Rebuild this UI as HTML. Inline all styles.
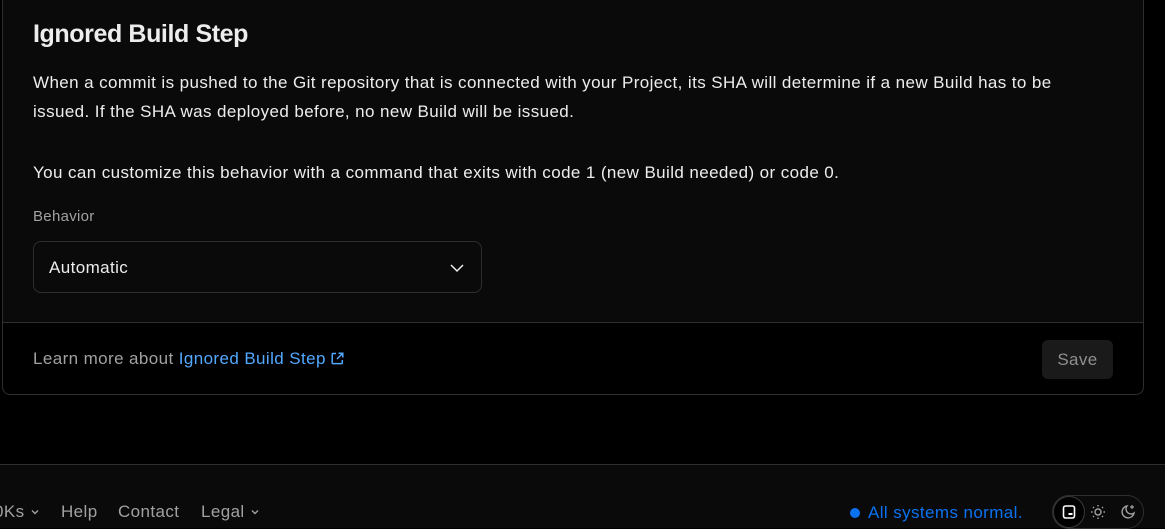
<!DOCTYPE html>
<html><head><style>
*{box-sizing:border-box;margin:0;padding:0}
body{width:1165px;height:528px;background:#000;font-family:"Liberation Sans",sans-serif;color:#ededed;position:relative;overflow:hidden}
.t{font-size:17px;letter-spacing:0.4px}
.card{position:absolute;left:2px;top:-10px;width:1142px;height:405px;border:1px solid #2e2e2e;border-radius:8px;background:#000;overflow:hidden}
.top{position:absolute;left:0;top:0;width:100%;height:332px;background:#0a0a0a;border-bottom:1px solid #2e2e2e}
h2{position:absolute;left:30px;top:29px;font-size:25px;font-weight:bold;letter-spacing:-0.4px;color:#ededed}
p{position:absolute;left:30px;line-height:29px;color:#ededed;width:1100px;white-space:nowrap}
.lbl{position:absolute;left:30px;top:217px;font-size:15px;letter-spacing:0.3px;color:#a1a1a1}
.sel{position:absolute;left:30px;top:250px;width:449px;height:52px;border:1px solid #2e2e2e;border-radius:8px;background:#0a0a0a}
.sel span{position:absolute;left:15px;top:16px;color:#ededed}
.sel svg{position:absolute;right:16px;top:18px}
.learn{position:absolute;left:30px;top:358px;color:#a1a1a1}
.learn a{color:#52a8ff;text-decoration:none}
.save{position:absolute;left:1039px;top:349px;width:71px;height:39px;border-radius:6px;background:#1a1a1a;color:#8f8f8f;text-align:center;line-height:39px}
.foot{position:absolute;left:0;top:464px;width:1165px;height:64px;background:#0a0a0a;border-top:1px solid #2e2e2e}
.fl{position:absolute;top:37px;color:#a1a1a1}
.status{position:absolute;left:868px;top:38px;color:#0a72ef}
.dot{position:absolute;left:850px;top:43px;width:10px;height:10px;border-radius:50%;background:#0a72ef}
.tog{position:absolute;left:1052px;top:30px;width:92px;height:34px;border:1px solid #2e2e2e;border-radius:17px}
.tog .a{position:absolute;left:0;top:0;width:32px;height:32px;border:1px solid #3a3a3a;border-radius:50%;background:#000}
</style></head><body>
<div class="card">
 <div class="top">
  <h2>Ignored Build Step</h2>
  <p class="t" style="top:77px">When a commit is pushed to the Git repository that is connected with your Project, its SHA will determine if a new Build has to be<br>issued. If the SHA was deployed before, no new Build will be issued.</p>
  <p class="t" style="top:167px">You can customize this behavior with a command that exits with code 1 (new Build needed) or code 0.</p>
  <div class="lbl">Behavior</div>
  <div class="sel"><span class="t">Automatic</span><svg width="16" height="16" viewBox="0 0 16 16"><path d="M2 5l6 6 6-6" fill="none" stroke="#ededed" stroke-width="1.5"/></svg></div>
 </div>
 <div class="learn t">Learn more about <a>Ignored Build Step <svg width="13" height="13" viewBox="0 0 13 13" style="vertical-align:-1px"><path d="M5 1.5H2a.8.8 0 0 0-.8.8v8.5a.8.8 0 0 0 .8.8h8.5a.8.8 0 0 0 .8-.8V8M7.5 1.2h4.3v4.3M11.8 1.2L6 7" fill="none" stroke="#52a8ff" stroke-width="1.5"/></svg></a></div>
 <div class="save t">Save</div>
</div>
<div class="foot">
 <div class="fl t" style="left:-6px">0Ks <svg width="10" height="10" viewBox="0 0 10 10"><path d="M2 3.5l3 3 3-3" fill="none" stroke="#a1a1a1" stroke-width="1.4"/></svg></div>
 <div class="fl t" style="left:61px">Help</div>
 <div class="fl t" style="left:118px">Contact</div>
 <div class="fl t" style="left:201px">Legal <svg width="10" height="10" viewBox="0 0 10 10"><path d="M2 3.5l3 3 3-3" fill="none" stroke="#a1a1a1" stroke-width="1.4"/></svg></div>
 <div class="dot"></div>
 <div class="status t">All systems normal.</div>
 <div class="tog"><div class="a"><svg width="14" height="14" viewBox="0 0 14 14" style="position:absolute;left:8px;top:8px"><rect x="1.5" y="1" width="11" height="12" rx="2" fill="none" stroke="#fff" stroke-width="1.6"/><rect x="6.5" y="8" width="4" height="2" fill="#fff"/></svg></div>
  <svg width="16" height="16" viewBox="0 0 16 16" style="position:absolute;left:37px;top:8px"><circle cx="8" cy="8" r="3" fill="none" stroke="#a1a1a1" stroke-width="1.4"/><path d="M8 1v1.5M8 13.5V15M1 8h1.5M13.5 8H15M3 3l1 1M12 12l1 1M3 13l1-1M12 4l1-1" stroke="#a1a1a1" stroke-width="1.4"/></svg>
  <svg width="16" height="16" viewBox="0 0 16 16" style="position:absolute;left:67px;top:8px"><path d="M7 2a6 6 0 1 0 7 7A5 5 0 0 1 7 2z" fill="none" stroke="#a1a1a1" stroke-width="1.4"/><path d="M12 1v4M10 3h4" stroke="#a1a1a1" stroke-width="1.2"/></svg>
 </div>
</div>
</body></html>
